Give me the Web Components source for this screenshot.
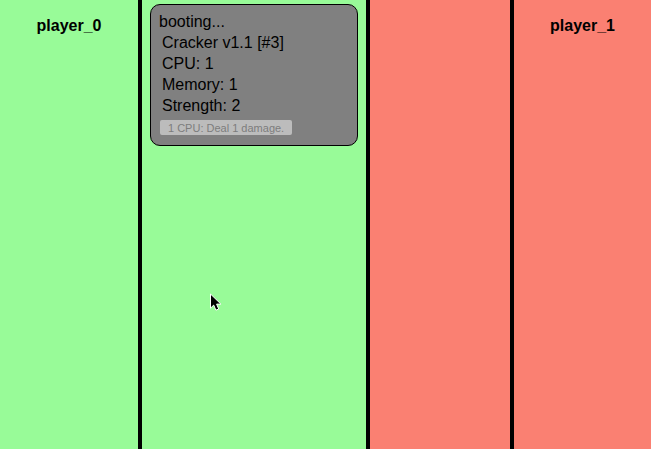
<!DOCTYPE html>
<html lang="en">
<head>
<meta charset="utf-8">
<title>Game board</title>
<style>
  html, body { height: 100%; }
  body { margin: 0; color: #000; font: 16px/21px "Liberation Sans", Arial, sans-serif; }
</style>
</head>
<body>
<game-board>
  <board-zone side="home"><player-name>player_0</player-name></board-zone>
  <board-zone side="home">
    <program-card action="1 CPU: Deal 1 damage.">
      <span slot="status">booting...</span>
      <program-stat>Cracker v1.1 [#3]</program-stat>
      <program-stat>CPU: 1</program-stat>
      <program-stat>Memory: 1</program-stat>
      <program-stat>Strength: 2</program-stat>
    </program-card>
  </board-zone>
  <board-zone side="away"></board-zone>
  <board-zone side="away" last><player-name>player_1</player-name></board-zone>
  <mouse-pointer slot="overlay"></mouse-pointer>
</game-board>
<script>
  const define = (name, html, setup) => {
    const template = document.createElement('template');
    template.innerHTML = html;
    customElements.define(name, class extends HTMLElement {
      constructor() {
        super();
        this.attachShadow({ mode: 'open' }).append(template.content.cloneNode(true));
      }
      connectedCallback() { if (setup) setup(this, this.shadowRoot); }
    });
  };

  define('game-board', `
    <style>
      :host { display: grid; position: relative; min-height: 100%; overflow: hidden; }
      main { display: grid; grid-template-columns: 142fr 228fr 144fr 137fr; }
    </style>
    <main><slot></slot></main>
    <slot name="overlay"></slot>`);

  define('board-zone', `
    <style>
      :host { display: block; box-sizing: border-box; min-width: 0; padding: 4px 8px; border-right: 4px solid #000; }
      :host([side="home"]) { background: #98fb98; }
      :host([side="away"]) { background: #fa8072; }
      :host([last]) { border-right: 0; }
    </style>
    <slot></slot>`);

  define('player-name', `
    <style>
      :host { display: block; padding-top: 11px; text-align: center; }
      h2 { margin: 0; font-size: 16px; line-height: 21px; font-weight: bold; }
    </style>
    <h2><slot></slot></h2>`);

  define('program-card', `
    <style>
      :host { display: block; box-sizing: border-box; padding: 6px 8px 10px; border: 1px solid #000; border-radius: 10px; background: #808080; }
      button { display: block; box-sizing: border-box; height: 15px; margin: 4px 1px 0; padding: 1px 8px 0; border: 0; border-radius: 2px; background: #bcbcbc; color: #7c7c7c; font: 11px/14px "Liberation Sans", Arial, sans-serif; white-space: nowrap; }
    </style>
    <slot name="status"></slot>
    <slot></slot>
    <button type="button" disabled></button>`,
    (host, root) => { root.querySelector('button').textContent = host.getAttribute('action'); });

  define('program-stat', `
    <style>:host { display: block; padding-left: 3px; }</style>
    <slot></slot>`);

  define('mouse-pointer', `
    <style>
      :host { position: absolute; left: 210px; top: 293px; pointer-events: none; }
      svg { display: block; }
    </style>
    <svg width="12" height="19" viewBox="0 0 12 19" aria-hidden="true">
      <path d="M.5 1v14.2l3.2-3.1 2.2 5.1 2.8-1.2-2.1-4.9h4.3z" fill="#000" stroke="#fff" stroke-width="1"/>
    </svg>`);
</script>
</body>
</html>
